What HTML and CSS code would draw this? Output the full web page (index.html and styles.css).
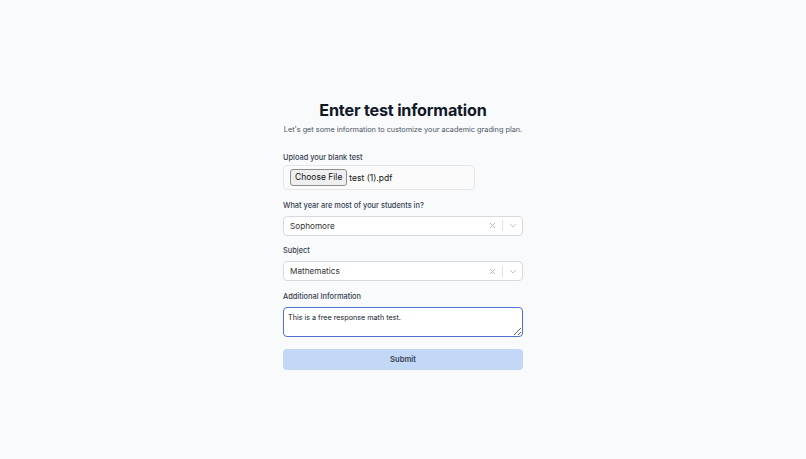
FILE: index.html
```html
<!DOCTYPE html>
<html lang="en">
<head>
<meta charset="utf-8">
<title>Enter test information</title>
<link rel="stylesheet" href="styles.css">
</head>
<body>
<main class="page">
  <form class="form">
    <h1 class="title">Enter test information</h1>
    <p class="subtitle">Let's get some information to customize your academic grading plan.</p>

    <div class="field field-first">
      <label class="label label-tight">Upload your blank test</label>
      <div class="file-box">
        <span class="file-btn">Choose File</span>
        <span class="file-name">test (1).pdf</span>
      </div>
    </div>

    <div class="field">
      <label class="label">What year are most of your students in?</label>
      <div class="select">
        <span class="select-value">Sophomore</span>
        <span class="select-indicators">
          <svg class="ind-clear" width="7" height="7" viewBox="0 0 7 7"><path d="M1 1L6 6M6 1L1 6" stroke="#bdbdbd" stroke-width="1" fill="none"/></svg>
          <span class="ind-sep"></span>
          <svg class="ind-chev" width="8" height="5" viewBox="0 0 8 5"><path d="M1 1L4 4L7 1" stroke="#c4c4c4" stroke-width="1" fill="none"/></svg>
        </span>
      </div>
    </div>

    <div class="field">
      <label class="label">Subject</label>
      <div class="select">
        <span class="select-value">Mathematics</span>
        <span class="select-indicators">
          <svg class="ind-clear" width="7" height="7" viewBox="0 0 7 7"><path d="M1 1L6 6M6 1L1 6" stroke="#bdbdbd" stroke-width="1" fill="none"/></svg>
          <span class="ind-sep"></span>
          <svg class="ind-chev" width="8" height="5" viewBox="0 0 8 5"><path d="M1 1L4 4L7 1" stroke="#c4c4c4" stroke-width="1" fill="none"/></svg>
        </span>
      </div>
    </div>

    <div class="field">
      <label class="label">Additional Information</label>
      <textarea class="textarea">This is a free response math test.</textarea>
    </div>

    <button type="button" class="submit">Submit</button>
  </form>
</main>
</body>
</html>
```

FILE: styles.css
```css
* { box-sizing: border-box; }
html, body { margin: 0; padding: 0; }
body {
  background: #f9fafb;
  font-family: Inter, "Liberation Sans", sans-serif;
  color: #111827;
  width: 806px;
  height: 459px;
}
.page {
  display: flex;
  justify-content: center;
  padding-top: 100px;
}
.form {
  width: 240px;
  display: flex;
  flex-direction: column;
}
.title {
  margin: 0;
  text-align: center;
  font-size: 16.2px;
  font-weight: 700;
  line-height: 20px;
  letter-spacing: -0.2px;
  color: #111827;
}
.subtitle {
  margin: 5px 0 0;
  text-align: center;
  font-size: 7.3px;
  line-height: 10px;
  color: #4b5563;
  white-space: nowrap;
}
.field {
  display: flex;
  flex-direction: column;
  margin-top: 10.5px;
}
.field-first { margin-top: 18px; }
.label {
  font-size: 7.4px;
  line-height: 10px;
  font-weight: 500;
  color: #374151;
  margin-bottom: 5px;
}
.label-tight { margin-bottom: 2px; }
.file-box {
  width: 192px;
  height: 25px;
  border: 1px solid #e5e7eb;
  border-radius: 4px;
  background: #fbfbfc;
  display: flex;
  align-items: center;
  padding-left: 6px;
  gap: 2px;
}
.file-btn {
  font-size: 8.5px;
  line-height: 15px;
  height: 17px;
  padding: 0 4px;
  background: #efefef;
  border: 1px solid #8f8f8f;
  border-radius: 3px;
  color: #111;
}
.file-name {
  font-size: 8.5px;
  color: #111;
}
.select {
  height: 20px;
  background: #fff;
  border: 1px solid #d6d9de;
  border-radius: 4px;
  display: flex;
  align-items: center;
  justify-content: space-between;
  padding-left: 6px;
}
.select-value {
  font-size: 8.2px;
  color: #333;
}
.select-indicators {
  display: flex;
  align-items: center;
  height: 100%;
}
.ind-clear { margin-right: 6px; }
.ind-sep {
  width: 1px;
  height: 11px;
  background: #e0e0e0;
}
.ind-chev { margin: 0 5px 0 6px; }
.textarea {
  display: block;
  width: 240px;
  height: 30px;
  border: 1.5px solid #4f72d0;
  border-radius: 4px;
  background: #fff;
  font-family: Inter, "Liberation Sans", sans-serif;
  font-size: 7.2px;
  line-height: 10px;
  color: #111827;
  padding: 5px 4px;
  resize: vertical;
  outline: none;
}
.submit {
  margin-top: 12px;
  height: 21px;
  border: none;
  border-radius: 4px;
  background: #c3d8f6;
  color: #374151;
  font-family: Inter, "Liberation Sans", sans-serif;
  font-size: 7.6px;
  font-weight: 600;
  padding: 0;
}
```
